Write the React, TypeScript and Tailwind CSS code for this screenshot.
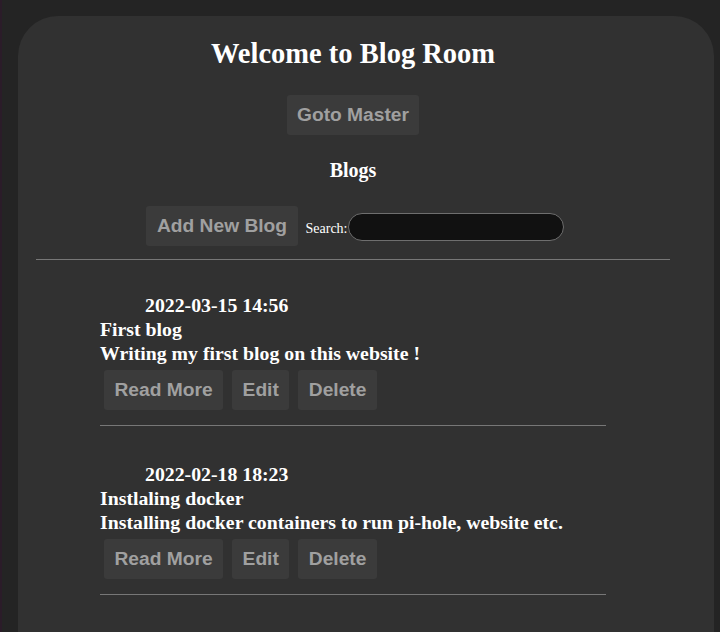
import React from "react";

const blogs = [
  { date: "2022-03-15 14:56", title: "First blog", text: "Writing my first blog on this website !" },
  { date: "2022-02-18 18:23", title: "Instlaling docker", text: "Installing docker containers to run pi-hole, website etc." },
];

const serif = "font-['Liberation_Serif',serif]";
const btn =
  "bg-[#3b3b3b] text-[#a0a0a0] font-bold font-['Liberation_Sans',Arial,sans-serif] text-[19.2px] leading-[24px] px-[10.5px] h-[40px] rounded-[3px]";

export default function App() {
  return (
    <div className="h-[632px] w-[720px] overflow-hidden bg-[#242424] border-l-2 border-[#2b1c29]">
      <div className={`ml-[16px] mt-[16px] w-[696px] h-[660px] rounded-[40px] bg-[#313131] text-white ${serif}`}>
        <div className="ml-[18px] w-[634px] flex flex-col items-center">
          <h1 className="mt-[23px] text-[28.5px] leading-[30px] font-bold text-white">Welcome to Blog Room</h1>
          <button className={`${btn} mt-[26px]`}>Goto Master</button>
          <h2 className="mt-[23px] text-[20px] leading-[24px] font-bold">Blogs</h2>
          <div className="mt-[24px] flex items-center ml-[4px]">
            <button className={btn}>Add New Blog</button>
            <label className="ml-[8px] text-[14px] mt-[5px]">Search:</label>
            <input
              type="text"
              className="w-[216px] h-[28px] rounded-full bg-[#111111] border border-[#6e6e6e] mt-[2px]"
            />
          </div>
          <hr className="mt-[13px] w-full border-t border-[#777777]" />
          <div className="w-[506px] mt-[33px]">
            {blogs.map((b) => (
              <div key={b.date} className="mb-[36px]">
                <div className="text-[19.8px] leading-[24px] font-bold">
                  <div className="pl-[45px]">{b.date}</div>
                  <div>{b.title}</div>
                  <div>{b.text}</div>
                </div>
                <div className="flex gap-[9px] ml-[4px] mt-[5px]">
                  <button className={btn}>Read More</button>
                  <button className={btn}>Edit</button>
                  <button className={btn}>Delete</button>
                </div>
                <hr className="mt-[15px] border-t border-[#777777]" />
              </div>
            ))}
          </div>
        </div>
      </div>
    </div>
  );
}
